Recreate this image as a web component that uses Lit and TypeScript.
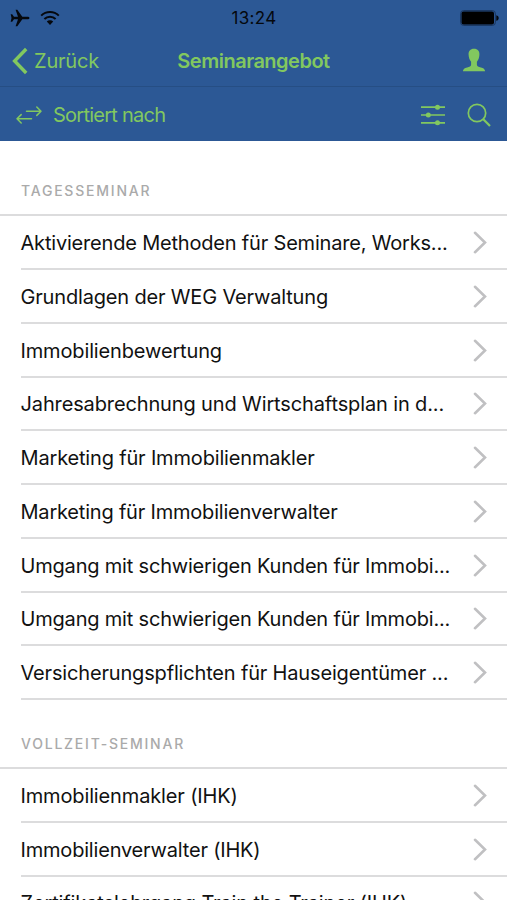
import { LitElement, html, css } from "lit";
import { customElement } from "lit/decorators.js";

interface Row {
  text: string;
  spacing: number;
}

const row = (text: string, spacing = -0.19): Row => ({ text, spacing });

const sections: { title: string; cls: string; rows: Row[] }[] = [
  {
    title: "TAGESSEMINAR",
    cls: "first",
    rows: [
      row("Aktivierende Methoden für Seminare, Works...", -0.19),
      row("Grundlagen der WEG Verwaltung", -0.17),
      row("Immobilienbewertung", -0.14),
      row("Jahresabrechnung und Wirtschaftsplan in d...", -0.13),
      row("Marketing für Immobilienmakler", -0.17),
      row("Marketing für Immobilienverwalter", -0.2),
      row("Umgang mit schwierigen Kunden für Immobi...", -0.19),
      row("Umgang mit schwierigen Kunden für Immobi...", -0.19),
      row("Versicherungspflichten für Hauseigentümer ...", -0.17),
    ],
  },
  {
    title: "VOLLZEIT-SEMINAR",
    cls: "next",
    rows: [
      row("Immobilienmakler (IHK)", -0.14),
      row("Immobilienverwalter (IHK)", -0.19),
      row("Zertifikatslehrgang Train the Trainer (IHK)", -0.13),
    ],
  },
];

@customElement("app-root")
export class AppRoot extends LitElement {
  static styles = css`
    :host {
      display: block;
      height: 900px;
      overflow: hidden;
      background: #fff;
      font-family: Inter, "Liberation Sans", sans-serif;
      color: #111;
    }
    svg { display: block; flex: none; }
    .head { background: #2c5895; color: #82c85f; }
    .status {
      height: 34px;
      display: grid;
      grid-template-columns: 1fr auto 1fr;
      align-items: center;
      color: #05080d;
      font-size: 17px;
      letter-spacing: 0.3px;
      padding: 1px 8px 0 9px;
      box-sizing: border-box;
    }
    .left { display: flex; gap: 10px; align-items: center; }
    .right { display: flex; justify-content: flex-end; }
    .nav {
      box-sizing: border-box;
      height: 53px;
      display: grid;
      grid-template-columns: 1fr auto 1fr;
      align-items: center;
      padding: 1px 12px 0 12px;
      border-bottom: 1px solid #264e84;
    }
    .back { display: flex; align-items: center; gap: 6px; font-size: 20px; letter-spacing: -0.2px; }
    .title { font-size: 20px; font-weight: 600; letter-spacing: -0.5px; }
    .user { padding-right: 9px; margin-top: -1px; }
    .tools { box-sizing: border-box; height: 54px; display: flex; align-items: center; padding: 1px 16px 0 16px; }
    .sort { font-size: 20px; letter-spacing: -0.75px; margin-left: 11px; flex: 1; }
    .find { margin-left: 22px; }
    .group {
      box-sizing: border-box;
      display: flex;
      align-items: flex-end;
      padding: 0 0 15px 21px;
      border-bottom: 2px solid #dcdcdd;
      font-size: 14px;
      line-height: 17px;
      font-weight: 500;
      letter-spacing: 1.78px;
      color: #aaa;
    }
    .first { height: 75.25px; }
    .next { height: 69px; }
    .row {
      box-sizing: border-box;
      height: 53.75px;
      margin-left: 21px;
      padding: 1.8px 19.7px 0 0;
      display: flex;
      align-items: center;
      justify-content: space-between;
      border-bottom: 2px solid #dcdcdd;
      font-size: 20px;
      white-space: nowrap;
    }
    .row span { margin-left: -0.5px; }
    .chev { margin-top: -2px; }
  `;

  private chevron() {
    return html`<svg class="chev" width="14" height="24" viewBox="0 0 14 24" fill="none" stroke="#c0c0c2" stroke-width="2.600" stroke-linecap="round"><path d="M2 2.800 12 12.500 2 22.200" /></svg>`;
  }

  render() {
    return html`
      <header class="head">
        <div class="status">
          <div class="left">
            <svg width="21" height="18" viewBox="0 0 21 18"><path fill="#05080d" d="M20.500 9c0-.8-1-1.300-2.200-1.300h-5L8.300.8H6.600L9 7.700H5L3.200 5.200H1.700L2.500 9l-.8 3.800h1.500L5 10.300h4L6.600 17.200h1.700l5-6.900h5c1.200 0 2.200-.5 2.200-1.300z"/></svg>
            <svg width="20" height="16" viewBox="0 0 20 16" fill="none" stroke="#05080d" stroke-width="2"><path d="M1.200 5.600a12.500 12.500 0 0 1 17.600 0M4.400 9a8 8 0 0 1 11.200 0"/><path fill="#05080d" stroke="none" d="M6.800 11.600a4.600 4.600 0 0 1 6.400 0L10 15z"/></svg>
          </div>
          <span>13:24</span>
          <div class="right">
            <svg width="39" height="16" viewBox="0 0 39 16"><rect x=".6" y=".6" width="34.800" height="14.800" rx="3" fill="none" stroke="#1a365e" stroke-width="1"/><rect x="1.500" y="1.500" width="32.500" height="13" rx="2" fill="#000"/><path d="M36.300 5.200c3.200.6 3.200 5 0 5.600z" fill="#05080d"/></svg>
          </div>
        </div>
        <div class="nav">
          <div class="back">
            <svg width="16" height="28" viewBox="0 0 16 28" fill="none" stroke="#82c85f" stroke-width="3.400"><path d="M14.200 2 2.600 14l11.600 12"/></svg>
            <span>Zurück</span>
          </div>
          <span class="title">Seminarangebot</span>
          <div class="right user">
            <svg width="24" height="24" viewBox="0 0 24 24"><path fill="#82c85f" d="M12 .8c3.800 0 5.600 2.400 5.400 6-.1 3-1 5.200-2.500 6.900v3.100c0 1.500 1.600 2 4 2.600 2.600.7 4 1.600 4.200 3.800H.9c.2-2.200 1.600-3.100 4.200-3.800 2.400-.6 4-1.100 4-2.600v-3.100c-1.500-1.700-2.400-3.900-2.500-6.900C6.400 3.200 8.200.8 12 .8z"/></svg>
          </div>
        </div>
        <div class="tools">
          <svg width="26" height="18" viewBox="0 0 26 18" fill="none" stroke="#82c85f" stroke-width="1.500" stroke-linecap="round" stroke-linejoin="round"><path d="M10.500 5.200H25M20.800 1 25 5.200l-4.200 4.200M15.500 12.800H1M5.200 8.600 1 12.800 5.200 17"/></svg>
          <span class="sort">Sortiert nach</span>
          <svg width="24" height="22" viewBox="0 0 24 22" stroke="#82c85f" stroke-width="1.700" fill="#82c85f"><path d="M0 3.200h24M0 11h24M0 18.800h24"/><g stroke="none"><circle cx="16.500" cy="3.200" r="2.500"/><circle cx="7.300" cy="11" r="2.500"/><circle cx="16.500" cy="18.800" r="2.500"/></g></svg>
          <svg class="find" width="24" height="24" viewBox="0 0 24 24" fill="none" stroke="#82c85f" stroke-width="1.700"><circle cx="10" cy="10" r="8.700"/><path stroke-width="2.200" d="M16.300 16.300 23 23"/></svg>
        </div>
      </header>
      ${sections.map(
        (s) => html`
          <div class="group ${s.cls}">${s.title}</div>
          ${s.rows.map(
            (r) => html`<div class="row"><span style="letter-spacing:${r.spacing}px">${r.text}</span>${this.chevron()}</div>`
          )}
        `
      )}
    `;
  }
}
